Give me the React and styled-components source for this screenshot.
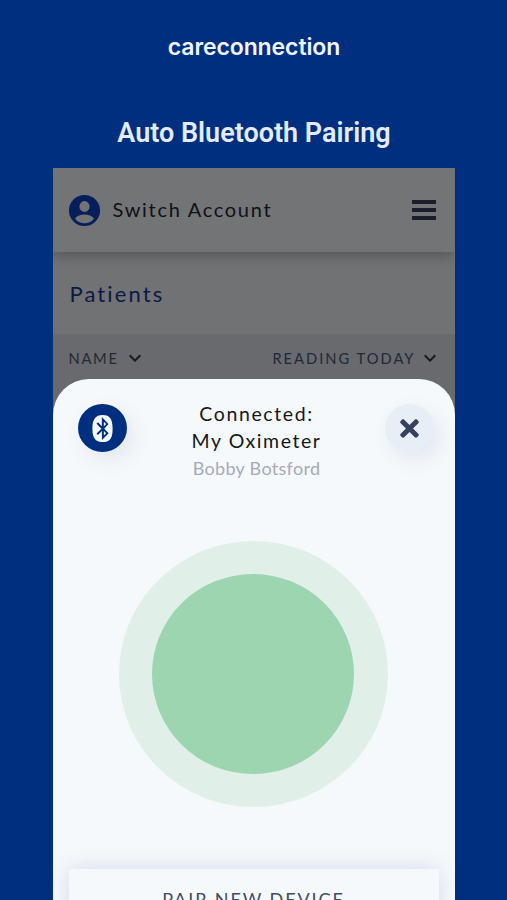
import React from "react";
import styled, { createGlobalStyle } from "styled-components";
import { MdExpandMore } from "react-icons/md";
import { FaBluetooth, FaTimes } from "react-icons/fa";

const AccountIcon = () => (
  <svg width="37" height="37" viewBox="0 0 24 24">
    <circle cx="12" cy="12" r="10.1" fill="#061f5c" />
    <ellipse cx="12" cy="9.4" rx="3.3" ry="3.5" fill="#727476" />
    <path
      d="M5.8 17.2Q8 14.6 12 14.6T18.2 17.2Q16 20.3 12 20.3T5.8 17.2Z"
      fill="#727476"
    />
  </svg>
);

const App = () => {
  return (
    <Page>
      <GlobalStyle />
      <Brand>careconnection</Brand>
      <Title>Auto Bluetooth Pairing</Title>
      <Phone>
        <TopBar>
          <AccountIcon />
          <AccountName>Switch Account</AccountName>
          <MenuButton>
            <span />
            <span />
            <span />
          </MenuButton>
        </TopBar>
        <Heading>Patients</Heading>
        <TableHead>
          <Column $spacing="1.7px" $gap="4px">
            NAME
            <MdExpandMore size={24} />
          </Column>
          <Column $spacing="2px" $gap="2px">
            READING TODAY
            <MdExpandMore size={24} />
          </Column>
        </TableHead>
        <Sheet>
          <SheetHeader>
            <RoundButton $bg="#002f7f" $color="#f6f9fc">
              <FaBluetooth size={27} />
            </RoundButton>
            <Device>
              <DeviceLine $spacing="1.6px">Connected:</DeviceLine>
              <DeviceLine $spacing="1.55px">My Oximeter</DeviceLine>
              <Patient>Bobby Botsford</Patient>
            </Device>
            <RoundButton $bg="#e8eef6" $color="#36415f">
              <FaTimes size={27} />
            </RoundButton>
          </SheetHeader>
          <Pulse>
            <PulseCore />
          </Pulse>
          <PairButton>PAIR NEW DEVICE</PairButton>
        </Sheet>
      </Phone>
    </Page>
  );
};

const GlobalStyle = createGlobalStyle`
  * {
    box-sizing: border-box;
  }
  body {
    margin: 0;
    background: #002f7f;
  }
`;

const Page = styled.main`
  width: 507px;
  height: 900px;
  overflow: hidden;
  display: flex;
  flex-direction: column;
  align-items: center;
  background: #002f7f;
`;

const Brand = styled.div`
  margin-top: 32px;
  padding-left: 1px;
  height: 30px;
  line-height: 30px;
  font-family: "Inter", sans-serif;
  font-size: 23px;
  font-weight: 600;
  letter-spacing: -0.1px;
  color: #f0f5ff;
`;

const Title = styled.h1`
  margin: 53px 0 0;
  padding-left: 1px;
  height: 36px;
  line-height: 36px;
  font-family: "Roboto", sans-serif;
  font-size: 27px;
  font-weight: 600;
  color: #e3ebfd;
`;

const Phone = styled.section`
  width: 402px;
  height: 732px;
  flex: none;
  margin-top: 17px;
  display: flex;
  flex-direction: column;
  background: #717274;
  font-family: "Lato", sans-serif;
`;

const TopBar = styled.header`
  height: 84px;
  flex: none;
  display: flex;
  align-items: center;
  padding: 0 19px 0 13px;
  background: #727476;
  box-shadow: 0 4px 12px rgba(0, 0, 0, 0.24);
  clip-path: inset(0 0 -24px 0);
`;

const AccountName = styled.span`
  margin: -3px 0 0 10px;
  font-size: 20px;
  letter-spacing: 1.7px;
  color: #101115;
`;

const MenuButton = styled.div`
  width: 24px;
  margin-left: auto;
  display: flex;
  flex-direction: column;
  gap: 4px;

  span {
    height: 4px;
    background: #191d2e;
  }
`;

const Heading = styled.h2`
  margin: 0;
  height: 82px;
  flex: none;
  padding-left: 17px;
  line-height: 83px;
  font-size: 22px;
  font-weight: 400;
  letter-spacing: 2.1px;
  color: #0b1947;
`;

const TableHead = styled.div`
  height: 85px;
  flex: none;
  display: flex;
  justify-content: space-between;
  padding: 12px 13px 0 16px;
  background: #696a6e;
`;

const Column = styled.div`
  display: flex;
  align-items: center;
  height: 24px;
  font-size: 14.7px;
  letter-spacing: ${(props) => props.$spacing};
  color: #232835;

  svg {
    margin-left: ${(props) => props.$gap};
    color: #17191f;
  }
`;

const Sheet = styled.section`
  flex: 1;
  margin-top: -40px;
  display: flex;
  flex-direction: column;
  align-items: center;
  overflow: hidden;
  border-radius: 36px 36px 0 0;
  background: #f6f9fb;
`;

const SheetHeader = styled.div`
  width: 100%;
  height: 162px;
  flex: none;
  display: flex;
  justify-content: space-between;
  padding: 25px 21px 0 25px;
`;

const RoundButton = styled.div`
  width: 49px;
  height: 48px;
  display: flex;
  align-items: center;
  justify-content: center;
  border-radius: 50%;
  background: ${(props) => props.$bg};
  color: ${(props) => props.$color};
  box-shadow: 6px 8px 20px rgba(90, 105, 165, 0.12);
`;

const Device = styled.div`
  margin-top: -4px;
  padding-left: 2px;
  text-align: center;
`;

const DeviceLine = styled.div`
  height: 27px;
  line-height: 27px;
  font-size: 19.5px;
  letter-spacing: ${(props) => props.$spacing};
  color: #15171b;
`;

const Patient = styled.div`
  height: 28px;
  line-height: 28px;
  font-size: 18px;
  letter-spacing: 0.3px;
  color: #a4abba;
`;

const Pulse = styled.div`
  width: 269px;
  height: 266px;
  flex: none;
  display: flex;
  align-items: center;
  justify-content: center;
  padding-right: 1px;
  border-radius: 50%;
  background: #e0f0e8;
`;

const PulseCore = styled.div`
  width: 202px;
  height: 200px;
  border-radius: 50%;
  background: #9cd5b0;
`;

const PairButton = styled.div`
  width: 370px;
  height: 60px;
  flex: none;
  margin-top: 62px;
  line-height: 60px;
  text-align: center;
  font-size: 18px;
  letter-spacing: 1.9px;
  color: #414b66;
  background: #f6f9fb;
  box-shadow: 0 0 22px rgba(80, 90, 165, 0.2);
`;

export default App;
